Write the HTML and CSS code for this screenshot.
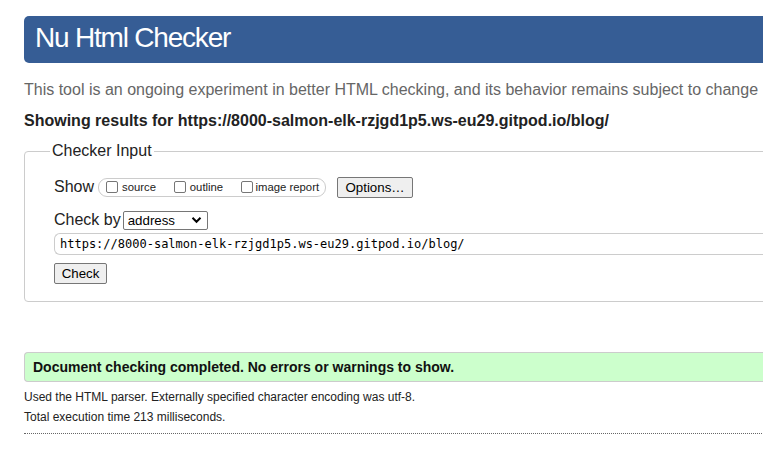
FILE: index.html
```html
<!DOCTYPE html>
<html lang="en">
<head>
<meta charset="utf-8">
<title>Nu Html Checker</title>
<link rel="stylesheet" href="styles.css">
</head>
<body>
<div class="page">
  <h1 class="banner">Nu Html Checker</h1>
  <p class="intro">This tool is an ongoing experiment in better HTML checking, and its behavior remains subject to change</p>
  <p class="showing">Showing results for https://8000-salmon-elk-rzjgd1p5.ws-eu29.gitpod.io/blog/</p>
  <fieldset class="input-box">
    <legend class="legend">Checker Input</legend>
    <div class="row show-row">
      <span class="label">Show</span>
      <span class="pill">
        <label class="opt"><span class="cb"></span>source</label>
        <label class="opt"><span class="cb"></span>outline</label>
        <label class="opt"><span class="cb"></span>image report</label>
      </span>
      <span class="btn options">Options…</span>
    </div>
    <div class="row by-row">
      <span class="label">Check by</span>
      <span class="select">address<svg class="chev" width="11" height="8" viewBox="0 0 11 8"><path d="M1.5 1.8 L5.5 5.8 L9.5 1.8" fill="none" stroke="#000" stroke-width="2"/></svg></span>
    </div>
    <div class="url">https://8000-salmon-elk-rzjgd1p5.ws-eu29.gitpod.io/blog/</div>
    <span class="btn check">Check</span>
  </fieldset>
  <div class="success">Document checking completed. No errors or warnings to show.</div>
  <p class="meta">Used the HTML parser. Externally specified character encoding was utf-8.</p>
  <p class="meta">Total execution time 213 milliseconds.</p>
  <div class="dotted"></div>
</div>
</body>
</html>
```
FILE: styles.css
```css
html, body {
  margin: 0;
  padding: 0;
  overflow: hidden;
  background: #fff;
}
body {
  font-family: "Liberation Sans", Arial, sans-serif;
  color: #222;
}
.page {
  width: 1000px;
  padding: 16px 0 0 24px;
}
.banner {
  margin: 0;
  height: 47px;
  box-sizing: border-box;
  background: #365d95;
  color: #fff;
  font-weight: normal;
  font-size: 28px;
  letter-spacing: -1.2px;
  line-height: 44px;
  padding-left: 11px;
  border-radius: 5px 0 0 5px;
}
.intro {
  margin: 17px 0 0;
  font-size: 16px;
  line-height: 20px;
  color: #666;
  white-space: nowrap;
}
.showing {
  margin: 11px 0 0;
  font-size: 16px;
  line-height: 20px;
  font-weight: bold;
  white-space: nowrap;
}
.input-box {
  margin: 11px 0 0;
  border: 1px solid #ccc;
  border-radius: 4px 0 0 4px;
  padding: 16px 0 17px 29px;
  min-width: 0;
}
.legend {
  font-size: 16px;
  margin-left: -4px;
  padding: 0 2px;
  line-height: 18px;
}
.row {
  display: flex;
  align-items: center;
}
.label {
  font-size: 16px;
  line-height: 20px;
}
.show-row {
  gap: 11px;
  height: 22px;
}
.pill {
  display: flex;
  align-items: center;
  height: 17px;
  border: 1px solid #ccc;
  border-radius: 9px;
  padding: 0 6px 0 7px;
  margin-left: -7px;
  width: 213px;
  box-sizing: content-box;
}
.opt {
  display: flex;
  align-items: center;
  font-size: 11.3px;
  gap: 4px;
  white-space: nowrap;
}
.opt:nth-child(1) { width: 69px; }
.opt:nth-child(2) { width: 68px; }
.opt:nth-child(3) { gap: 3px; }
.cb {
  width: 10px;
  height: 10px;
  border: 1px solid #767676;
  border-radius: 2px;
  background: #fff;
}
.btn {
  display: inline-flex;
  align-items: center;
  justify-content: center;
  box-sizing: border-box;
  background: #efefef;
  border: 1px solid #767676;
  border-radius: 2px;
  font-size: 13.3px;
  color: #000;
  height: 21px;
}
.options {
  width: 76px;
}
.by-row {
  margin-top: 12px;
  gap: 2px;
}
.select {
  display: inline-flex;
  align-items: center;
  justify-content: space-between;
  box-sizing: border-box;
  width: 85px;
  height: 19px;
  border: 1px solid #767676;
  border-radius: 2px;
  font-size: 13.3px;
  padding: 0 5px 0 4px;
  color: #000;
}
.url {
  margin-top: 3px;
  box-sizing: border-box;
  height: 22px;
  border: 1px solid #ccc;
  border-right: none;
  border-radius: 6px 0 0 6px;
  font-family: "DejaVu Sans Mono", "Liberation Mono", monospace;
  font-size: 12px;
  line-height: 20px;
  padding-left: 5px;
  color: #000;
  white-space: nowrap;
}
.check {
  margin-top: 8px;
  width: 53px;
}
.success {
  margin-top: 50px;
  box-sizing: border-box;
  height: 30px;
  background: #ccffcc;
  border: 1px solid #ccc;
  border-right: none;
  border-radius: 4px 0 0 4px;
  font-size: 14px;
  font-weight: bold;
  line-height: 28px;
  padding-left: 8px;
  color: #111;
}
.meta {
  margin: 0;
  font-size: 12px;
  line-height: 14px;
  color: #222;
}
.success + .meta {
  margin-top: 8px;
}
.meta + .meta {
  margin-top: 6px;
}
.dotted {
  margin-top: 9px;
  border-top: 1px dotted #666;
}
```
